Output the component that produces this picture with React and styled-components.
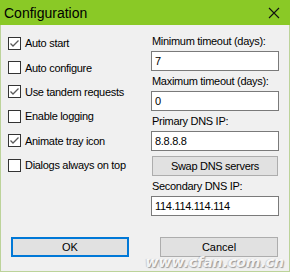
import React from 'react';
import styled, { createGlobalStyle } from 'styled-components';

const Global = createGlobalStyle`
  html, body {
    margin: 0;
    padding: 0;
    background: #f0f0f0;
  }
  * {
    box-sizing: border-box;
  }
`;

const checkboxes = [
  { label: 'Auto start', checked: true },
  { label: 'Auto configure', checked: false },
  { label: 'Use tandem requests', checked: true },
  { label: 'Enable logging', checked: false },
  { label: 'Animate tray icon', checked: true },
  { label: 'Dialogs always on top', checked: false },
];

function Check({ checked }) {
  return (
    <Box>
      {checked && (
        <svg width="11" height="11" viewBox="0 0 11 11">
          <polyline points="1.5,5.5 4,8 9.5,2.5" fill="none" stroke="#5a5a5a" strokeWidth="1.3" />
        </svg>
      )}
    </Box>
  );
}

export default function App() {
  return (
    <>
      <Global />
      <Window>
        <TitleBar>
          <Title>Configuration</Title>
          <Close width="12" height="12" viewBox="0 0 12 12">
            <path d="M1 1 L11 11 M11 1 L1 11" stroke="#111" strokeWidth="1.1" />
          </Close>
        </TitleBar>
        <Body>
          <Columns>
            <LeftCol>
              {checkboxes.map((c) => (
                <CheckRow key={c.label}>
                  <Check checked={c.checked} />
                  <span>{c.label}</span>
                </CheckRow>
              ))}
            </LeftCol>
            <RightCol>
              <Label>Minimum timeout (days):</Label>
              <Field readOnly value="7" />
              <Label>Maximum timeout (days):</Label>
              <Field readOnly value="0" />
              <Label>Primary DNS IP:</Label>
              <Field readOnly value="8.8.8.8" />
              <SwapButton>Swap DNS servers</SwapButton>
              <Label>Secondary DNS IP:</Label>
              <Field readOnly value="114.114.114.114" />
            </RightCol>
          </Columns>
          <Footer>
            <DialogButton $primary>OK</DialogButton>
            <DialogButton>Cancel</DialogButton>
          </Footer>
          <Watermark>www.cfan.com.cn</Watermark>
        </Body>
      </Window>
    </>
  );
}

const Window = styled.div`
  width: 290px;
  height: 272px;
  display: flex;
  flex-direction: column;
  font-family: 'Liberation Sans', Arial, sans-serif;
  font-size: 11px;
  letter-spacing: -0.3px;
  color: #000;
`;

const TitleBar = styled.div`
  height: 26px;
  background: #8ac926;
  display: flex;
  align-items: center;
  justify-content: space-between;
  padding: 0 10px 0 4px;
`;

const Title = styled.div`
  font-family: 'Liberation Sans', Arial, sans-serif;
  font-size: 14px;
  letter-spacing: 0;
  color: #000;
  padding-top: 1px;
`;

const Close = styled.svg`
  display: block;
  margin-top: 1px;
`;

const Body = styled.div`
  position: relative;
  flex: 1;
  background: #f0f0f0;
  border: 1px solid #bcd39a;
  border-top: none;
  padding: 6px 9px 14px 7px;
  display: flex;
  flex-direction: column;
`;

const Columns = styled.div`
  display: grid;
  grid-template-columns: 143px 128px;
`;

const LeftCol = styled.div`
  display: flex;
  flex-direction: column;
`;

const CheckRow = styled.div`
  height: 24.4px;
  display: flex;
  align-items: center;
  gap: 4px;
`;

const Box = styled.div`
  width: 13px;
  height: 13px;
  border: 1px solid #333;
  background: #fff;
  display: flex;
  align-items: center;
  justify-content: center;
`;

const RightCol = styled.div`
  display: flex;
  flex-direction: column;
`;

const Label = styled.div`
  height: 20px;
  line-height: 20px;
  padding-left: 1px;
`;

const Field = styled.input`
  height: 20px;
  width: 100%;
  border: 1px solid #7a7a7a;
  background: #fff;
  padding: 0 3px;
  margin: 0;
  font-family: inherit;
  font-size: 11px;
  letter-spacing: -0.3px;
  color: #000;
  outline: none;
`;

const SwapButton = styled.button`
  height: 20px;
  margin: 5px 1px 0;
  border: 1px solid #adadad;
  background: #e1e1e1;
  font-family: inherit;
  font-size: 11px;
  letter-spacing: -0.3px;
  color: #000;
  padding: 0;
`;

const Footer = styled.div`
  margin-top: 21px;
  padding: 0 2px 0 3px;
  display: flex;
  justify-content: space-between;
`;

const DialogButton = styled.button`
  width: 118px;
  height: 20px;
  padding: 0;
  background: #e1e1e1;
  border: ${(p) => (p.$primary ? '2px solid #0078d7' : '1px solid #adadad')};
  font-family: inherit;
  font-size: 11px;
  letter-spacing: 0;
  color: #000;
`;

const Watermark = styled.div`
  position: absolute;
  right: 5px;
  bottom: 1px;
  font-family: 'DejaVu Sans', sans-serif;
  font-style: italic;
  font-weight: bold;
  font-size: 14px;
  line-height: 16px;
  letter-spacing: 0;
  color: rgba(255, 255, 255, 0.9);
  text-shadow: 1px 1px 1px rgba(0, 0, 0, 0.35), -1px 0 1px rgba(0, 0, 0, 0.15);
  pointer-events: none;
`;
